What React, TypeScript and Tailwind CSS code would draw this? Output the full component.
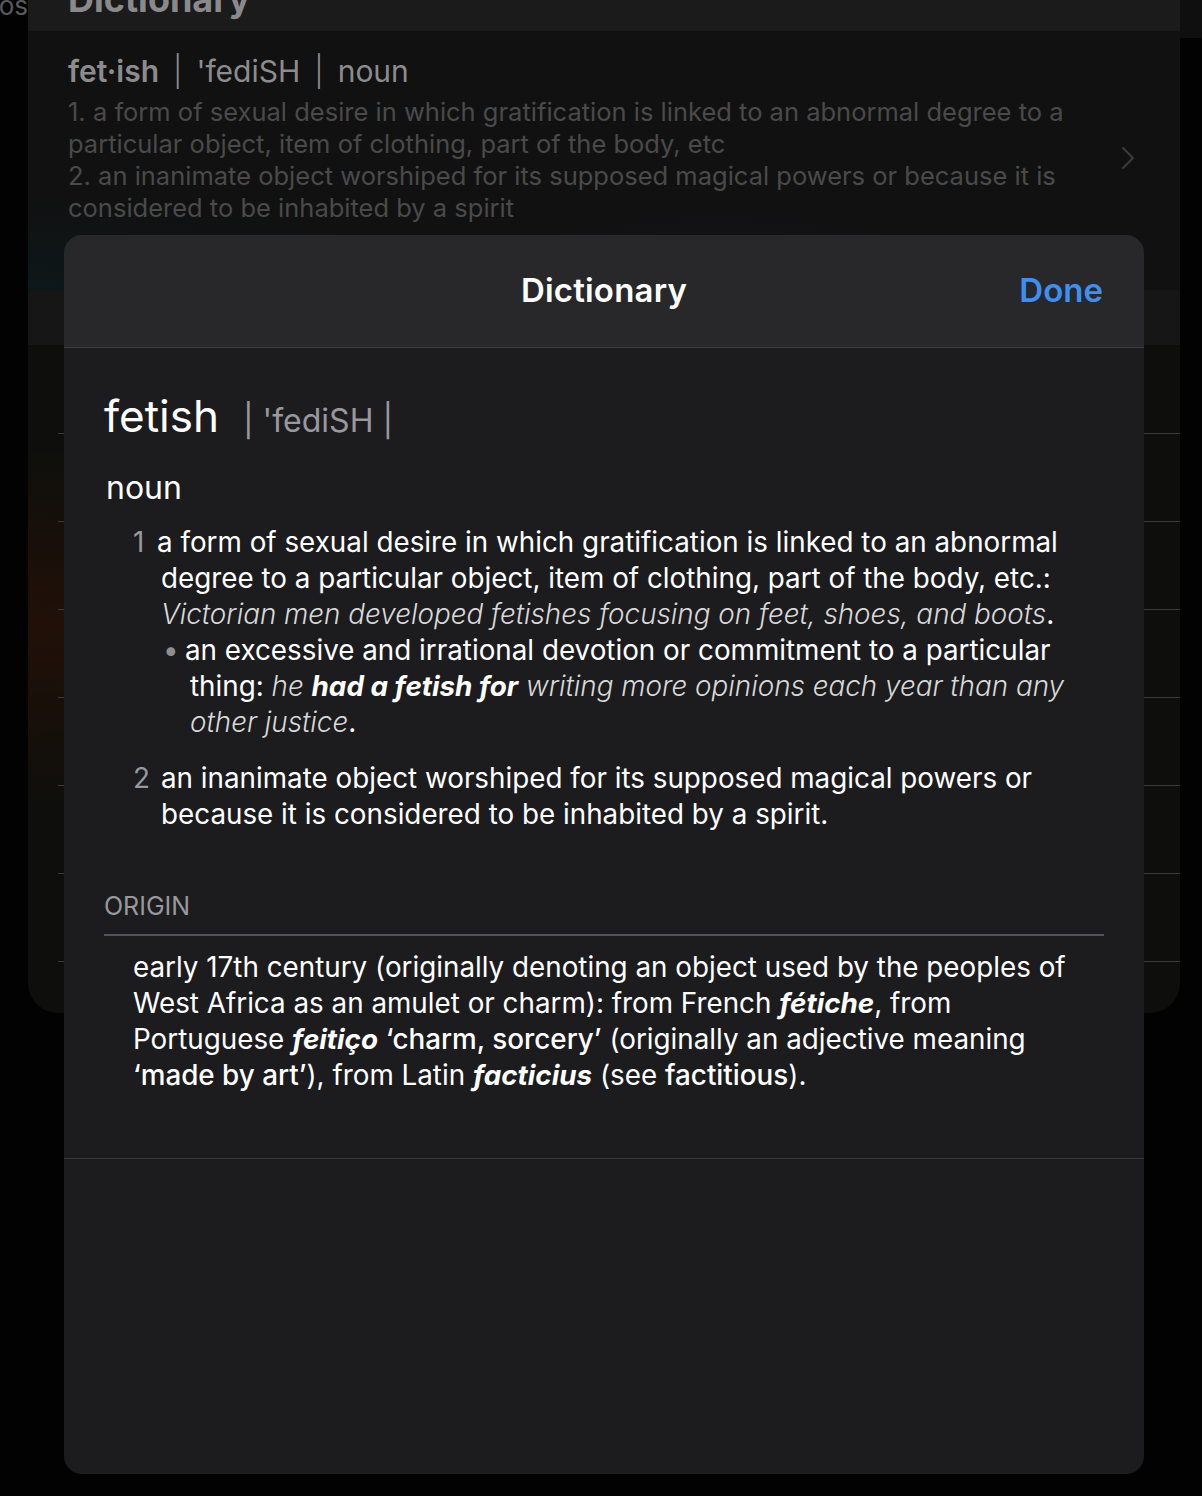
import { ChevronRight } from 'lucide-react'

const font = { fontFamily: 'Inter, "Noto Sans", sans-serif' }

function BackgroundCard() {
  const rows = [0, 1, 2, 3, 4, 5, 6]
  return (
    <div className="w-[1152px] h-[1013px] rounded-b-[30px] overflow-hidden bg-[#0e0f0c] flex flex-col">
      {/* cut-off header */}
      <div className="h-[31px] shrink-0 bg-[#1b1b1c] overflow-hidden pl-[40px]">
        <div className="-mt-[25px] text-[36px] leading-[48px] font-bold text-[#8a8a8c]">Dictionary</div>
      </div>

      {/* dimmed dictionary preview */}
      <div className="h-[259px] shrink-0 bg-[#111111] bg-[radial-gradient(ellipse_at_0%_100%,#0d1719_0%,transparent_25%),radial-gradient(ellipse_at_60%_100%,#14121a_0%,transparent_25%)] pl-[40px] pr-[40px] pt-[22px] flex items-start">
        <div className="flex-1">
          <div className="text-[30px] leading-[36px] text-[#8c8c8e]">
            <span className="font-semibold">fet·ish</span>
            <span className="mx-[14px] font-light">|</span>
            <span>'fediSH</span>
            <span className="mx-[14px] font-light">|</span>
            <span>noun</span>
          </div>
          <div className="mt-[7px] text-[25.5px] leading-[32px] text-[#4a4a4b]">
            <p>1. a form of sexual desire in which gratification is linked to an abnormal degree to a particular object, item of clothing, part of the body, etc</p>
            <p>2. an inanimate object worshiped for its supposed magical powers or because it is considered to be inhabited by a spirit</p>
          </div>
        </div>
        <ChevronRight className="mt-[85px] -mr-[8px] text-[#3a3a3b]" size={40} strokeWidth={1.3} />
      </div>

      {/* section band */}
      <div className="h-[55px] shrink-0 bg-[#161616]" />

      {/* list rows */}
      <div className="flex-1 bg-[radial-gradient(ellipse_at_0%_40%,#211008_0%,transparent_30%)]">
        <div className="h-[88px]" />
        {rows.map((r) => (
          <div key={r} className="h-[88px] ml-[30px] border-t border-[#3b3b3a]" />
        ))}
      </div>
    </div>
  )
}

function DictionarySheet() {
  return (
    <div className="absolute left-[64px] top-[235px] w-[1080px] h-[1239px] rounded-[18px] overflow-hidden bg-[#1c1c1e] text-white">
      {/* header */}
      <div className="h-[113px] bg-[#28282a] border-b border-[#3c3c3f] grid grid-cols-[1fr_auto_1fr] items-center">
        <div />
        <div className="text-[33px] font-semibold tracking-[0.2px]">Dictionary</div>
        <div className="justify-self-end pr-[41px] text-[33px] font-semibold text-[#3d8ff2]">Done</div>
      </div>

      {/* entry */}
      <div className="pl-[40px] pr-[40px] pt-[40px] pb-[65px] border-b border-[#38383a]">
        <div className="flex items-baseline">
          <span className="text-[44px] leading-[56px]">fetish</span>
          <span className="ml-[24px] text-[32px] text-[#98989d]">| 'fediSH |</span>
        </div>
        <div className="mt-[23px] ml-[2px] text-[32px] leading-[40px]">noun</div>

        <div className="mt-[16px] text-[27.8px] leading-[36px]">
          <div className="pl-[57px] -indent-[28px]">
            <span className="inline-block w-[24px] indent-0 text-[#98989d]">1</span>a form of sexual desire in which gratification is linked to an abnormal degree to a particular object, item of clothing, part of the body, etc.:{' '}
            <span className="italic font-light text-[#d8d8d8]">Victorian men developed fetishes focusing on feet, shoes, and boots</span>.
          </div>
          <div className="pl-[86px] -indent-[27px]">
            <span className="inline-block w-[22px] indent-0 text-[#8e8e93]">•</span>an excessive and irrational devotion or commitment to a particular thing:{' '}
            <span className="italic font-light text-[#d8d8d8]">he </span>
            <span className="italic font-bold">had a fetish for</span>
            <span className="italic font-light text-[#d8d8d8]"> writing more opinions each year than any other justice</span>.
          </div>
          <div className="mt-[20px] pl-[57px] -indent-[28px]">
            <span className="inline-block w-[28px] indent-0 text-[#98989d]">2</span>an inanimate object worshiped for its supposed magical powers or because it is considered to be inhabited by a spirit.
          </div>
        </div>

        <div className="mt-[58px] text-[25px] leading-[32px] text-[#98989d] uppercase">Origin</div>
        <div className="mt-[12px] h-[2px] bg-[#545458]" />
        <div className="mt-[13px] pl-[29px] text-[27.8px] leading-[36px]">
          early 17th century (originally denoting an object used by the peoples of West Africa as an amulet or charm): from French{' '}
          <span className="italic font-bold">fétiche</span>, from Portuguese <span className="italic font-bold">feitiço</span>{' '}
          <span className="font-medium">‘charm, sorcery’</span> (originally an adjective meaning{' '}
          <span className="font-medium">‘made by art’</span>), from Latin <span className="italic font-bold">facticius</span> (see{' '}
          <span className="font-medium">factitious</span>).
        </div>
      </div>
    </div>
  )
}

export default function App() {
  return (
    <div className="relative w-[1202px] h-[1496px] bg-[#010201] overflow-hidden" style={font}>
      <div className="flex items-start">
        <div className="w-[28px] shrink-0 overflow-hidden flex justify-end">
          <div className="-mt-[12px] text-[26px] leading-[36px] text-[#5a5a5c] whitespace-nowrap">os</div>
        </div>
        <BackgroundCard />
        <div className="w-[22px] h-[38px] shrink-0 bg-[#0f0f0f]" />
      </div>
      <DictionarySheet />
    </div>
  )
}
